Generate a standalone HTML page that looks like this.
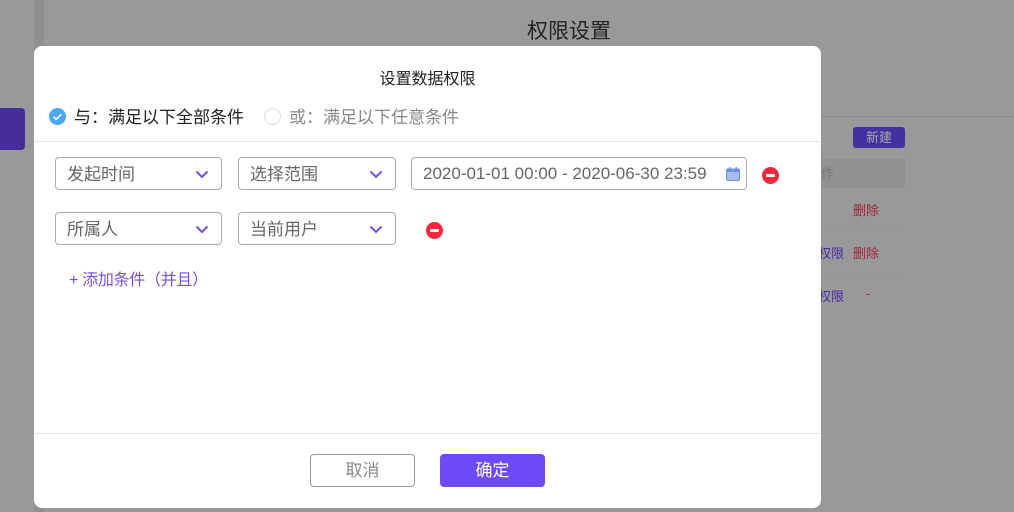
<!DOCTYPE html>
<html><head><meta charset="utf-8"><style>
*{margin:0;padding:0;box-sizing:border-box}
body{width:1014px;height:512px;background:#999;position:relative;overflow:hidden;font-family:"Liberation Sans","Noto Sans CJK SC",sans-serif;}
.a{position:absolute}
.sel{position:absolute;border:1px solid #aaa7b0;border-radius:4px;height:33px;background:#fff;font-size:17px;color:#666;line-height:34px;padding-left:11px}
.sel svg{position:absolute;right:12px;top:12px}
.rm{position:absolute;width:17px;height:17px;border-radius:50%;background:#f5283c}
.rm:after{content:"";position:absolute;left:4px;top:7px;width:9px;height:3px;background:#fff;border-radius:1px}
</style></head><body>
<div class="a" style="left:34px;top:0;width:10px;height:512px;background:#8f8f8f"></div>
<div class="a" style="left:0;top:108px;width:25px;height:42px;background:#432e9c;border-radius:0 4px 4px 0"></div>
<div class="a" style="left:527px;top:15px;font-size:21px;color:#222">权限设置</div>
<div class="a" style="left:821px;top:116px;width:193px;height:1px;background:#8a8a8a"></div>
<div class="a" style="left:853px;top:127px;width:52px;height:21px;background:#4430a0;border-radius:3px;color:#aaa;font-size:13px;line-height:21px;text-align:center">新建</div>
<div class="a" style="left:821px;top:159px;width:84px;height:29px;background:#919191;font-size:13px;color:#777;line-height:29px">作</div>
<div class="a" style="left:853px;top:200px;font-size:13px;color:#a0243c">删除</div>
<div class="a" style="left:821px;top:230px;width:84px;height:1px;background:#959595"></div>
<div class="a" style="left:818px;top:243px;font-size:13px;color:#4a2ea0">权限</div>
<div class="a" style="left:853px;top:243px;font-size:13px;color:#a0243c">删除</div>
<div class="a" style="left:821px;top:273px;width:84px;height:1px;background:#959595"></div>
<div class="a" style="left:818px;top:286px;font-size:13px;color:#4a2ea0">权限</div>
<div class="a" style="left:866px;top:286px;font-size:13px;color:#c02030">-</div>

<div class="a" style="left:34px;top:46px;width:787px;height:462px;background:#fff;border-radius:8px">
 <div class="a" style="left:0;width:787px;top:19px;text-align:center;font-size:16px;color:#222">设置数据权限</div>
 <div class="a" style="left:15px;top:62px;width:17px;height:17px;border-radius:50%;background:#4aa8f5">
  <svg width="17" height="17" style="position:absolute;left:0;top:0"><path d="M4.5 8.8 L7.3 11.4 L12.3 6.2" stroke="#fff" stroke-width="1.6" fill="none"/></svg></div>
 <div class="a" style="left:40px;top:57px;font-size:17px;color:#222">与：满足以下全部条件</div>
 <div class="a" style="left:230px;top:62px;width:17px;height:17px;border-radius:50%;border:1px solid #ddd"></div>
 <div class="a" style="left:255px;top:57px;font-size:17px;color:#888">或：满足以下任意条件</div>
 <div class="a" style="left:0;top:95px;width:787px;height:1px;background:#e3e3e3"></div>
 <div class="sel" style="left:21px;top:111px;width:167px">发起时间<svg width="14" height="9"><path d="M1.5 1.5 L7 7 L12.5 1.5" stroke="#7a4cf0" stroke-width="2" fill="none"/></svg></div>
 <div class="sel" style="left:204px;top:111px;width:158px">选择范围<svg width="14" height="9"><path d="M1.5 1.5 L7 7 L12.5 1.5" stroke="#7a4cf0" stroke-width="2" fill="none"/></svg></div>
 <div class="sel" style="left:377px;top:111px;width:336px;line-height:31px">2020-01-01 00:00 - 2020-06-30 23:59
  <svg width="14" height="14" style="top:9px;right:6px"><rect x="0.5" y="2" width="13" height="11.5" rx="1.5" fill="#a6bdf2" stroke="#6f8fe0"/><rect x="0.5" y="2" width="13" height="3" fill="#6f8fe0"/><rect x="3" y="0" width="1.5" height="3" fill="#6f8fe0"/><rect x="9.5" y="0" width="1.5" height="3" fill="#6f8fe0"/></svg></div>
 <div class="rm" style="left:728px;top:121px"></div>
 <div class="sel" style="left:21px;top:166px;width:167px">所属人<svg width="14" height="9"><path d="M1.5 1.5 L7 7 L12.5 1.5" stroke="#7a4cf0" stroke-width="2" fill="none"/></svg></div>
 <div class="sel" style="left:204px;top:166px;width:158px">当前用户<svg width="14" height="9"><path d="M1.5 1.5 L7 7 L12.5 1.5" stroke="#7a4cf0" stroke-width="2" fill="none"/></svg></div>
 <div class="rm" style="left:392px;top:176px"></div>
 <div class="a" style="left:35px;top:220px;font-size:16px;color:#7a4cf0;letter-spacing:-0.3px">+ 添加条件（并且）</div>
 <div class="a" style="left:0;top:387px;width:787px;height:1px;background:#e3e3e3"></div>
 <div class="a" style="left:276px;top:408px;width:105px;height:33px;border:1px solid #999;border-radius:4px;text-align:center;line-height:31px;font-size:17px;color:#888">取消</div>
 <div class="a" style="left:406px;top:408px;width:105px;height:33px;background:#6c4cfa;border-radius:4px;text-align:center;line-height:33px;font-size:17px;color:#fff">确定</div>
</div>
</body></html>
